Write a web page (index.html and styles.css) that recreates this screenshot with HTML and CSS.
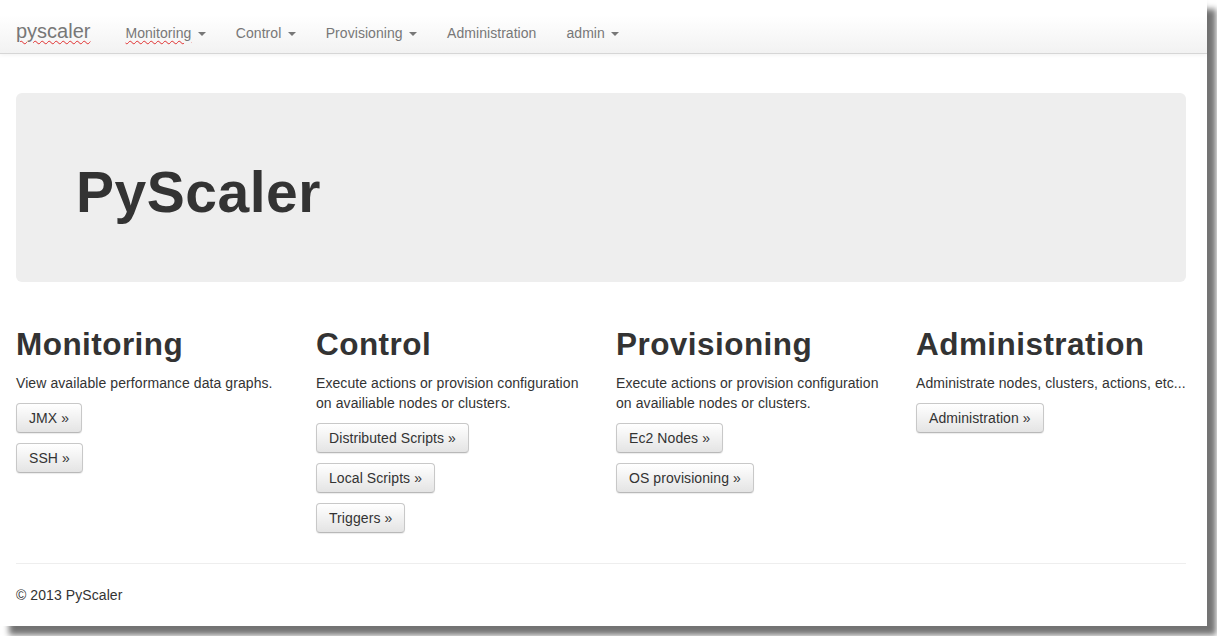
FILE: index.html
```html
<!DOCTYPE html>
<html>
<head>
	<title>PyScaler</title>
	<link rel="stylesheet" href="styles.css">
</head>
<body>
<div class="window">
	<div class="navbar">
		<a class="brand spell" href="#">pyscaler</a>
		<ul class="nav">
			<li><a href="#"><span class="spell">Monitoring</span> <b class="caret"></b></a></li>
			<li><a href="#">Control <b class="caret"></b></a></li>
			<li><a href="#">Provisioning <b class="caret"></b></a></li>
			<li><a href="#">Administration</a></li>
			<li><a href="#">admin <b class="caret"></b></a></li>
		</ul>
	</div>

	<div class="container">
		<div class="jumbotron">
			<h1>PyScaler</h1>
		</div>

		<div class="row">
			<div class="column">
				<h2>Monitoring</h2>
				<p>View available performance data graphs.</p>
				<p><a class="btn" href="#">JMX &raquo;</a></p>
				<p><a class="btn" href="#">SSH &raquo;</a></p>
			</div>
			<div class="column">
				<h2>Control</h2>
				<p>Execute actions or provision configuration on availiable nodes or clusters.</p>
				<p><a class="btn" href="#">Distributed Scripts &raquo;</a></p>
				<p><a class="btn" href="#">Local Scripts &raquo;</a></p>
				<p><a class="btn" href="#">Triggers &raquo;</a></p>
			</div>
			<div class="column">
				<h2>Provisioning</h2>
				<p>Execute actions or provision configuration on availiable nodes or clusters.</p>
				<p><a class="btn" href="#">Ec2 Nodes &raquo;</a></p>
				<p><a class="btn" href="#">OS provisioning &raquo;</a></p>
			</div>
			<div class="column">
				<h2>Administration</h2>
				<p>Administrate nodes, clusters, actions, etc...</p>
				<p><a class="btn" href="#">Administration &raquo;</a></p>
			</div>
		</div>

		<hr>

		<div class="footer">
			<p>&copy; 2013 PyScaler</p>
		</div>
	</div>
</div>
</body>
</html>
```

FILE: styles.css
```css
html, body {
	margin: 0;
	padding: 0;
	background: #fff;
	overflow: hidden;
}
html {
	height: 636px;
}
body {
	height: 636px;
	font-family: "Liberation Sans", Arial, sans-serif;
	font-size: 14px;
	line-height: 20px;
	letter-spacing: 0.08px;
	color: #333;
}
a {
	text-decoration: none;
}

.window {
	width: 1207px;
	height: 626px;
	background: #fff;
	box-shadow: 9px 9px 6px rgba(0, 0, 0, 0.55);
}

/* top navigation */
.navbar {
	display: flex;
	align-items: baseline;
	height: 32px;
	padding: 21px 0 0 16px;
	background: linear-gradient(to bottom, #fff 0, #fff 15px, #f2f2f2 53px);
	border-bottom: 1px solid #d6d6d6;
	box-shadow: 0 1px 4px rgba(0, 0, 0, 0.06);
}
.brand {
	font-size: 20px;
	line-height: 20px;
	letter-spacing: 0;
	color: #777;
	margin-right: 20px;
}
.spell {
	text-decoration: underline wavy #e03030;
	text-decoration-thickness: 1px;
	text-underline-offset: 2px;
}
.nav {
	display: flex;
	align-items: baseline;
	list-style: none;
	margin: 0;
	padding: 0;
}
.nav a {
	display: block;
	padding: 0 15px;
	color: #777;
	line-height: 20px;
	letter-spacing: 0.05px;
}
.caret {
	display: inline-block;
	width: 0;
	height: 0;
	margin-left: 2.5px;
	vertical-align: middle;
	border-top: 4px solid #777;
	border-left: 4px solid transparent;
	border-right: 4px solid transparent;
}

/* page */
.container {
	width: 1170px;
	margin-left: 16px;
}
.jumbotron {
	margin: 39px 0 30px;
	padding: 48px 60px;
	background: #eee;
	border-radius: 6px;
}
.jumbotron h1 {
	margin: 20px 0 10px;
	font-size: 57px;
	line-height: 63px;
	letter-spacing: 0.5px;
	font-weight: bold;
	color: #333;
}

.row {
	display: flex;
	margin: 0 -15px;
}
.column {
	width: 300px;
	padding: 0 15px;
	box-sizing: border-box;
}
.column h2 {
	margin: 15px 0 11px;
	font-size: 31.5px;
	line-height: 35px;
	letter-spacing: 0.45px;
	font-weight: bold;
	color: #333;
}
p {
	margin: 0 0 10px;
}

.btn {
	display: inline-block;
	padding: 4px 12px;
	font-size: 14px;
	line-height: 20px;
	color: #333;
	border: 1px solid #c8c8c8;
	border-bottom-color: #b8b8b8;
	border-radius: 4px;
	background: linear-gradient(to bottom, #fff 0, #e4e4e4 100%);
	box-shadow: inset 0 1px 0 rgba(255, 255, 255, 0.2), 0 1px 1px rgba(0, 0, 0, 0.08);
}

hr {
	margin: 20px 0 21px;
	border: 0;
	border-top: 1px solid #eee;
}
.footer p {
	margin: 0;
}
```
